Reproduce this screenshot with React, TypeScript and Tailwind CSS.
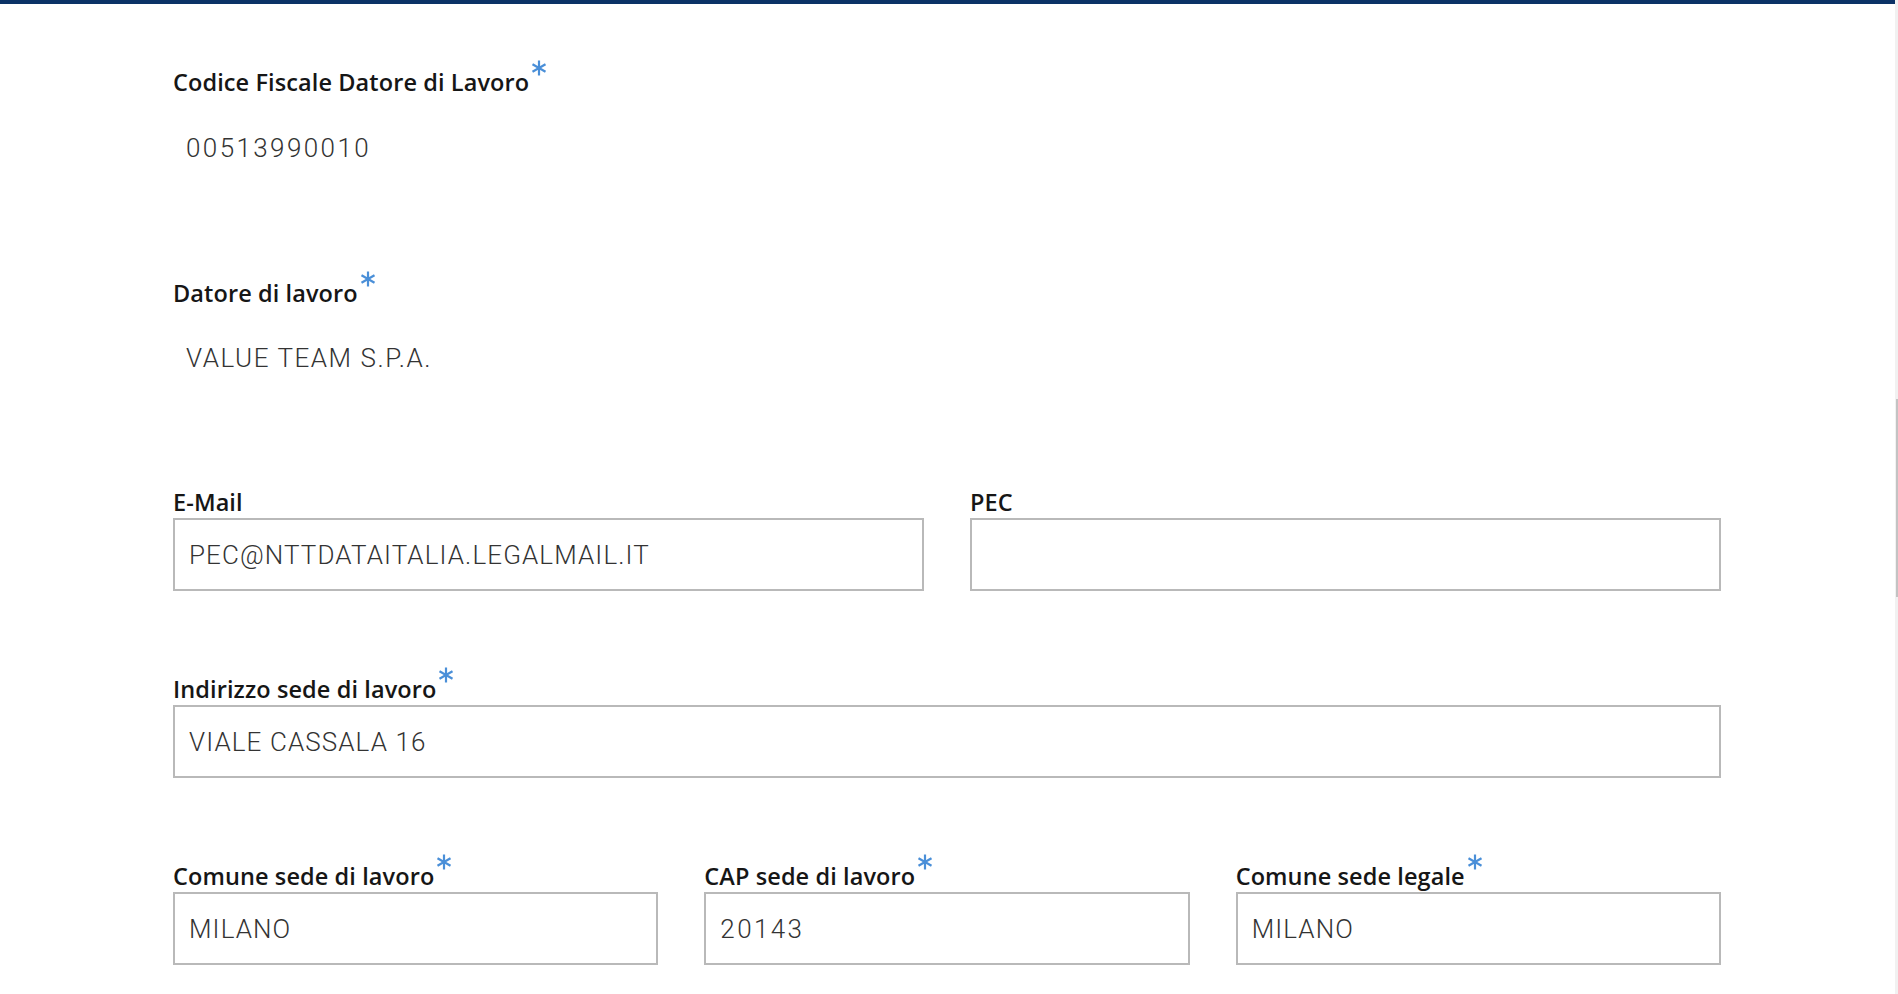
import React from 'react'

function Asterisk() {
  return (
    <svg
      width="16"
      height="16"
      viewBox="0 0 16 16"
      className="ml-[2px] -mt-[7px] shrink-0"
      aria-hidden="true"
    >
      <g stroke="#4a8fd8" strokeWidth="2.2" strokeLinecap="butt">
        <line x1="8" y1="0.5" x2="8" y2="15.5" />
        <line x1="1.5" y1="4.25" x2="14.5" y2="11.75" />
        <line x1="1.5" y1="11.75" x2="14.5" y2="4.25" />
      </g>
    </svg>
  )
}

function Label({ text, required }: { text: string; required?: boolean }) {
  return (
    <div className="flex items-start font-['Open_Sans','Noto_Sans',sans-serif] text-[23.5px] leading-[31px] font-semibold tracking-[0.1px] text-[#161616]">
      <span>{text}</span>
      {required && <Asterisk />}
    </div>
  )
}

const valueText = 'text-[26px] font-light text-[#333]'

function StaticField({
  label,
  value,
  gap,
  tracking,
}: {
  label: string
  value: string
  gap: string
  tracking: string
}) {
  return (
    <div>
      <Label text={label} required />
      <div className={`${gap} pl-[13px] leading-[32px] ${valueText} ${tracking}`}>{value}</div>
    </div>
  )
}

function InputField({
  label,
  value,
  required,
  numeric,
}: {
  label: string
  value: string
  required?: boolean
  numeric?: boolean
}) {
  return (
    <div>
      <Label text={label} required={required} />
      <input
        readOnly
        value={value}
        className={`block h-[73px] w-full border-2 border-[#b9b9b9] bg-white pl-[14px] pt-[1px] outline-none ${valueText} ${numeric ? 'tracking-[2.4px]' : 'tracking-[1.1px]'}`}
      />
    </div>
  )
}

export default function App() {
  return (
    <div className="flex h-[994px] w-[1898px] overflow-hidden bg-white font-['Roboto','Noto_Sans',sans-serif]">
      <div className="flex-1">
        <div className="h-[4px] bg-[#0b3266]" />
        <div className="ml-[173px] w-[1548px] pt-[63px]">
          <StaticField
            label="Codice Fiscale Datore di Lavoro"
            value="00513990010"
            gap="mt-[34px]"
            tracking="tracking-[2.4px]"
          />
          <div className="mt-[114px]">
            <StaticField
              label="Datore di lavoro"
              value="VALUE TEAM S.P.A."
              gap="mt-[33px]"
              tracking="tracking-[1.55px]"
            />
          </div>
          <div className="mt-[113px] grid grid-cols-2 gap-x-[46px]">
            <InputField label="E-Mail" value="PEC@NTTDATAITALIA.LEGALMAIL.IT" />
            <InputField label="PEC" value="" />
          </div>
          <div className="mt-[83px]">
            <InputField label="Indirizzo sede di lavoro" value="VIALE CASSALA 16" required />
          </div>
          <div className="mt-[83px] grid grid-cols-3 gap-x-[46px]">
            <InputField label="Comune sede di lavoro" value="MILANO" required />
            <InputField label="CAP sede di lavoro" value="20143" required numeric />
            <InputField label="Comune sede legale" value="MILANO" required />
          </div>
        </div>
      </div>
      <div className="w-[3px] bg-[#f1f1f1] pt-[399px]">
        <div className="ml-auto h-[198px] w-[2px] bg-[#c3c3c3]" />
      </div>
    </div>
  )
}
